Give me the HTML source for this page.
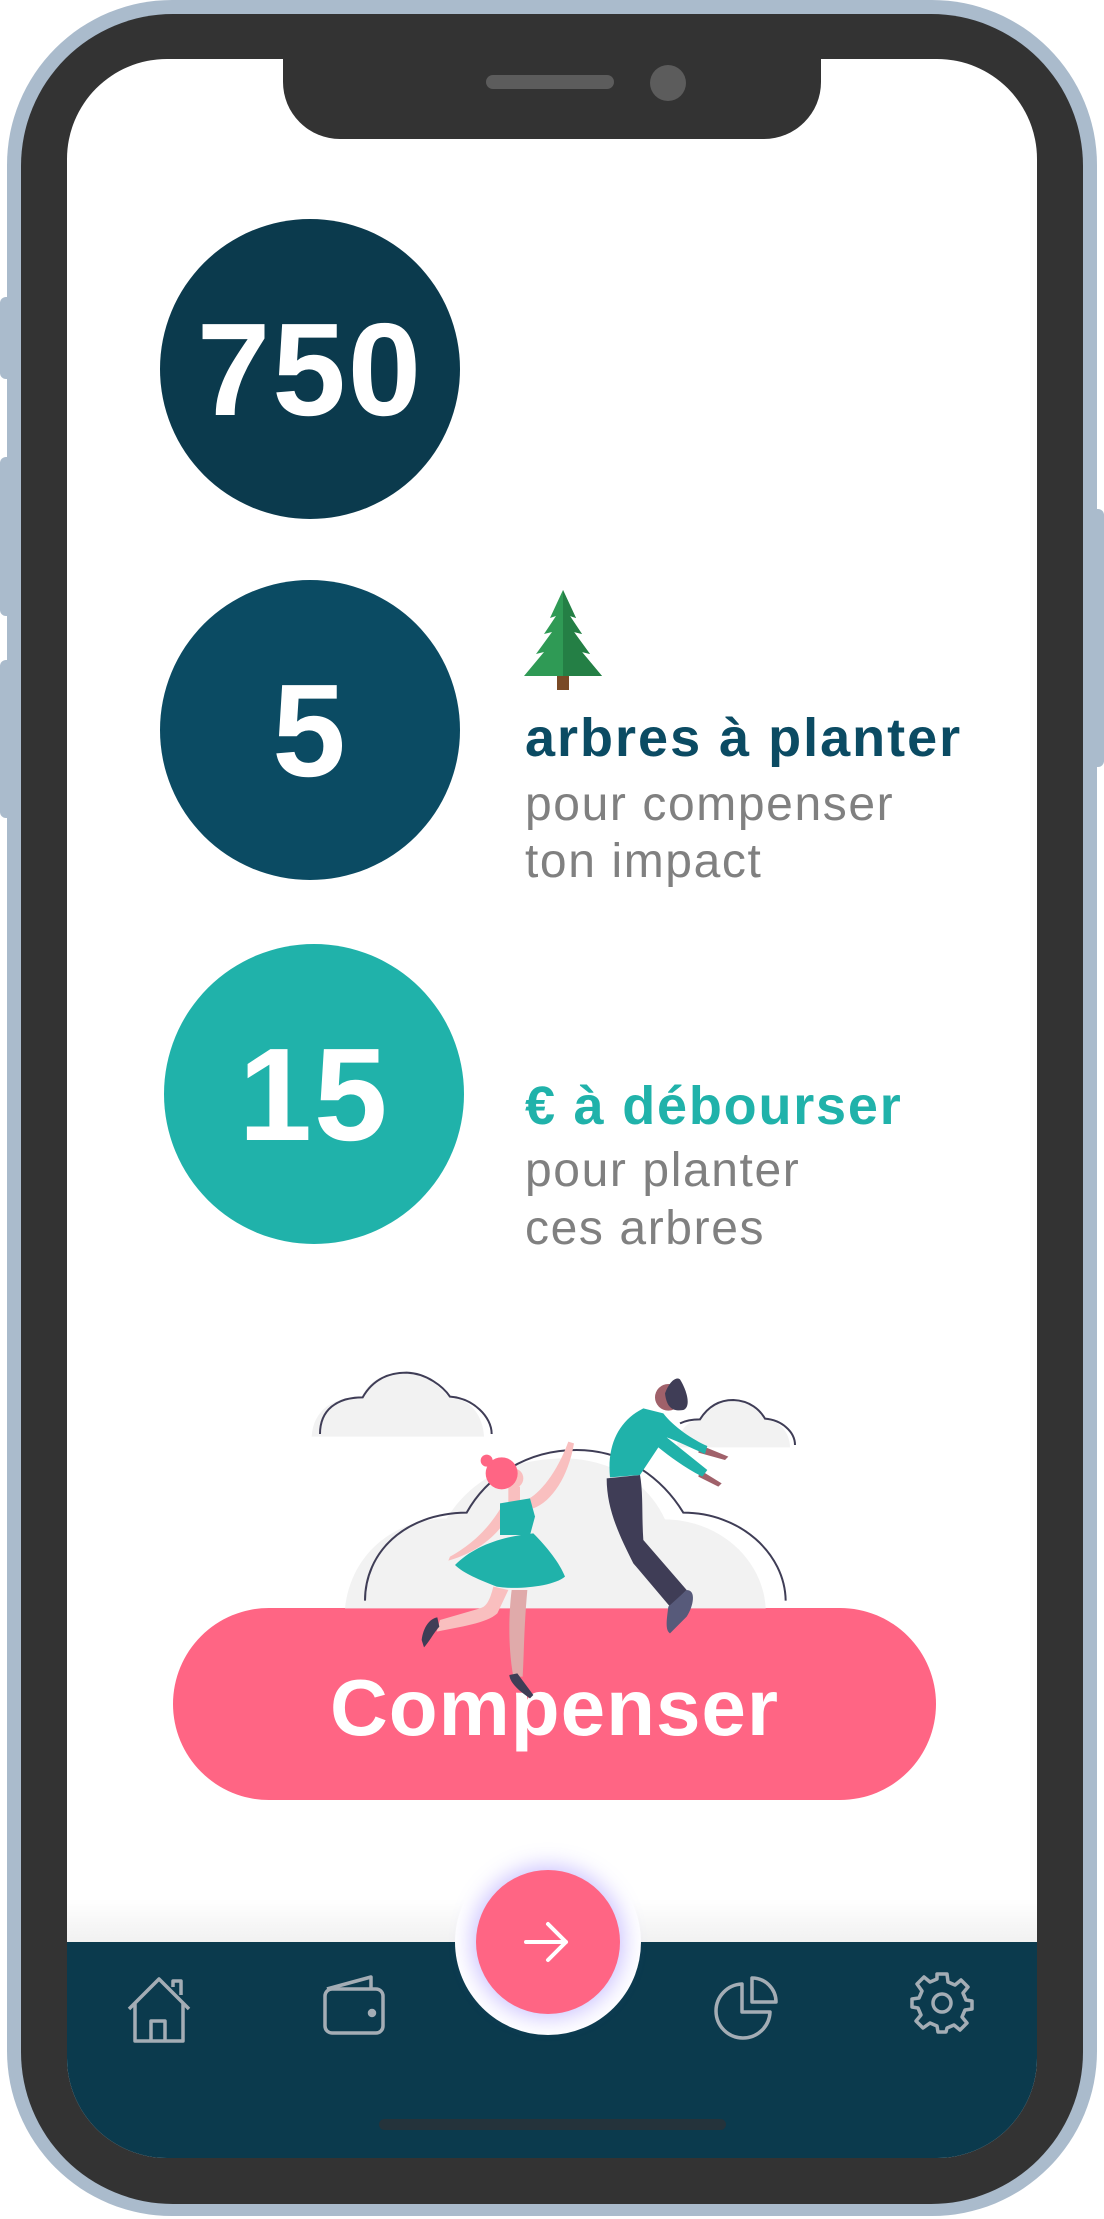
<!DOCTYPE html>
<html><head><meta charset="utf-8"><style>
*{margin:0;padding:0;box-sizing:border-box}
body{width:1104px;height:2219px;background:#fff;position:relative;overflow:hidden;font-family:"Liberation Sans",sans-serif}
.a{position:absolute}
.circ{position:absolute;border-radius:50%;color:#fff;font-weight:bold;display:flex;align-items:center;justify-content:center;font-size:132px;letter-spacing:2px}
.t{position:absolute;left:525px;white-space:nowrap;line-height:1}
.b{font-weight:bold;font-size:54px;letter-spacing:2px}
.g{font-size:48px;color:#808080;letter-spacing:1.6px}
</style></head><body>
<div class="a" style="left:0;top:297px;width:14px;height:82px;background:#aabbcc;border-radius:6px"></div>
<div class="a" style="left:0;top:457px;width:14px;height:159px;background:#aabbcc;border-radius:6px"></div>
<div class="a" style="left:0;top:660px;width:14px;height:158px;background:#aabbcc;border-radius:6px"></div>
<div class="a" style="left:1090px;top:509px;width:14px;height:258px;background:#aabbcc;border-radius:6px"></div>
<div class="a" style="left:7px;top:0;width:1090px;height:2216px;background:#aabbcc;border-radius:165px"></div>
<div class="a" style="left:21px;top:14px;width:1062px;height:2190px;background:#333;border-radius:152px"></div>
<div class="a" style="left:67px;top:59px;width:970px;height:2099px;background:#fff;border-radius:100px;overflow:hidden">
  <div class="a" style="left:0;top:1840px;width:970px;height:43px;background:linear-gradient(#fff,#f1f1f1)"></div>
  <div class="a" style="left:0;top:1883px;width:970px;height:300px;background:#0b3a4d"></div>
  <div class="a" style="left:388px;top:1790px;width:186px;height:186px;border-radius:50%;background:#fff"></div>
  <div class="a" style="left:409px;top:1811px;width:144px;height:144px;border-radius:50%;background:#ff6584;box-shadow:0 0 22px 4px rgba(140,120,255,0.45)"></div>
  <svg class="a" style="left:455px;top:1861px" width="52" height="44" viewBox="0 0 52 44"><path d="M4 22H44M26 4L44 22L26 40" stroke="#fff" stroke-width="4" fill="none" stroke-linecap="round" stroke-linejoin="round"/></svg>
  <svg class="a" style="left:58px;top:1916px" width="68" height="70" viewBox="0 0 68 70" fill="none" stroke="#a4adb5" stroke-width="3.5" stroke-linejoin="round"><path d="M4 34L34 4L64 34M10 28V66H58V28M26 66V46H40V66M48 12V6H56V20"/></svg>
  <svg class="a" style="left:254px;top:1914px" width="66" height="64" viewBox="0 0 66 64" fill="none" stroke="#a4adb5" stroke-width="3.5" stroke-linejoin="round"><rect x="4" y="16" width="58" height="44" rx="7"/><path d="M6 16L50 4V16"/><circle cx="51" cy="40" r="2.5" fill="#a4adb5"/></svg>
  <svg class="a" style="left:647px;top:1915px" width="66" height="66" viewBox="0 0 66 66" fill="none" stroke="#a4adb5" stroke-width="3.5" stroke-linejoin="round"><path d="M28 10A27 27 0 1 0 56 38H28Z"/><path d="M38 4A24 24 0 0 1 62 28H38Z"/></svg>
  <svg class="a" style="left:843px;top:1911px" width="64" height="64" viewBox="0 0 64 64" fill="none" stroke="#a4adb5" stroke-width="3.5" stroke-linejoin="round"><path d="M27 4H37L38 12L45 15L51 10L58 17L53 23L56 30L62 31V39L55 40L52 47L57 53L50 60L44 55L37 58L36 62H28L27 56L20 53L13 58L6 51L11 45L8 38L2 37V29L9 28L12 21L7 14L14 7L20 12L27 9Z"/><circle cx="32" cy="33" r="9"/></svg>
  <div class="a" style="left:312px;top:2060px;width:347px;height:11px;border-radius:6px;background:#24333b"></div>
</div>
<div class="a" style="left:283px;top:50px;width:538px;height:89px;background:#333;border-radius:0 0 57px 57px"></div>
<div class="a" style="left:486px;top:75px;width:128px;height:14px;background:#5c5c5c;border-radius:7px"></div>
<div class="a" style="left:650px;top:65px;width:36px;height:36px;background:#5c5c5c;border-radius:50%"></div>

<div class="circ" style="left:160px;top:219px;width:300px;height:300px;background:#0b3a4d">750</div>
<div class="circ" style="left:160px;top:580px;width:300px;height:300px;background:#0b4b63">5</div>
<div class="circ" style="left:164px;top:944px;width:300px;height:300px;background:#20b2aa">15</div>

<svg class="a" style="left:520px;top:588px" width="86" height="104" viewBox="0 0 86 104">
<rect x="37" y="84" width="12" height="18" fill="#7a4a26"/>
<path d="M43 2L56 30L50 28L62 46L54 44L70 66L62 64L82 88L4 88L24 64L16 66L32 44L24 46L36 28L30 30Z" fill="#2f9a55"/>
<path d="M43 2L56 30L50 28L62 46L54 44L70 66L62 64L82 88L43 88Z" fill="#247f45"/>
</svg>

<div class="t b" style="top:711px;color:#0b4b63">arbres à planter</div>
<div class="t g" style="top:781px">pour compenser</div>
<div class="t g" style="top:838px">ton impact</div>
<div class="t b" style="top:1079px;color:#20b2aa;letter-spacing:1.8px">€ à débourser</div>
<div class="t g" style="top:1147px">pour planter</div>
<div class="t g" style="top:1205px">ces arbres</div>

<div class="a" style="left:173px;top:1608px;width:763px;height:192px;border-radius:96px;background:#ff6584;color:#fff;font-weight:bold;font-size:80px;text-align:center;line-height:200px;letter-spacing:1px">Compenser</div>

<svg class="a" style="left:300px;top:1360px" width="520" height="350" viewBox="0 0 1560 1050">
<path d="M35 230C40 150 100 110 185 112C210 50 270 38 320 40C380 42 420 80 450 115C510 112 550 170 552 230Z" fill="#f2f2f2"/>
<path d="M60 222C60 150 110 112 188 112C220 55 270 38 320 38C380 40 430 80 450 110C520 115 575 170 575 222" fill="none" stroke="#3f3d56" stroke-width="6"/>
<path d="M1130 262C1140 200 1170 180 1200 180C1230 130 1270 120 1300 122C1350 125 1380 150 1395 178C1440 180 1470 220 1470 262Z" fill="#f2f2f2"/>
<path d="M1140 190C1160 180 1180 178 1200 178C1230 130 1270 120 1300 120C1350 122 1380 150 1395 176C1445 180 1485 215 1485 255" fill="none" stroke="#3f3d56" stroke-width="6"/>
<path d="M135 745C150 600 260 480 440 475C520 350 640 295 800 295C950 300 1050 380 1095 478C1260 480 1390 600 1397 745Z" fill="#f2f2f2"/>
<path d="M195 722C195 580 310 460 500 458C560 350 680 270 830 270C980 270 1090 360 1150 458C1320 458 1455 580 1457 722" fill="none" stroke="#3f3d56" stroke-width="6"/>
<path d="M680 420C720 400 770 340 805 245L822 250C805 350 755 425 700 445Z" fill="#f9bfbf"/>
<path d="M605 440C580 480 540 540 450 590L445 602C540 575 595 520 625 470Z" fill="#f9bfbf"/>
<path d="M635 690L682 690C672 800 672 880 668 950L640 950C625 870 625 770 635 690Z" fill="#e0aaaa"/>
<path d="M580 680C570 720 560 740 540 745L420 780L410 815C480 800 560 790 592 760L625 690Z" fill="#f9bfbf"/>
<path d="M365 840C370 800 390 775 412 772L418 800C400 820 385 850 372 862Z" fill="#3f3d56"/>
<path d="M628 945L652 940L700 1005L690 1015C660 995 630 970 628 945Z" fill="#3f3d56"/>
<rect x="625" y="380" width="35" height="50" fill="#f9bfbf"/>
<path d="M600 430L690 415L705 470L690 525L600 525Z" fill="#20b2aa"/>
<path d="M465 615C520 560 600 530 700 520C740 560 780 610 795 650C760 680 650 690 590 680C540 660 490 640 465 615Z" fill="#20b2aa"/>
<circle cx="640" cy="355" r="30" fill="#f9bfbf"/>
<circle cx="605" cy="340" r="48" fill="#ff6584"/>
<circle cx="560" cy="302" r="18" fill="#ff6584"/>
<path d="M1200 255L1285 290L1275 300L1195 278Z" fill="#a0616a"/>
<path d="M1200 330L1265 370L1255 380L1195 350Z" fill="#a0616a"/>
<circle cx="1105" cy="112" r="40" fill="#a0616a"/>
<path d="M1095 100C1110 60 1130 50 1140 58C1160 90 1175 140 1150 150C1120 155 1100 145 1095 100Z" fill="#3f3d56"/>
<path d="M920 355L1020 345C1030 400 1025 470 1030 540L1160 690L1110 740L1000 610C960 530 920 450 920 355Z" fill="#3f3d56"/>
<path d="M1105 740L1160 690C1190 690 1180 740 1160 770L1110 820C1095 810 1100 780 1105 740Z" fill="#575a7a"/>
<path d="M930 352C920 250 960 180 1030 145L1090 160C1120 200 1180 240 1222 258L1215 282C1170 262 1130 242 1100 232L1222 330L1207 350C1150 320 1110 290 1075 262L1020 345Z" fill="#20b2aa"/>
</svg>
</body></html>
